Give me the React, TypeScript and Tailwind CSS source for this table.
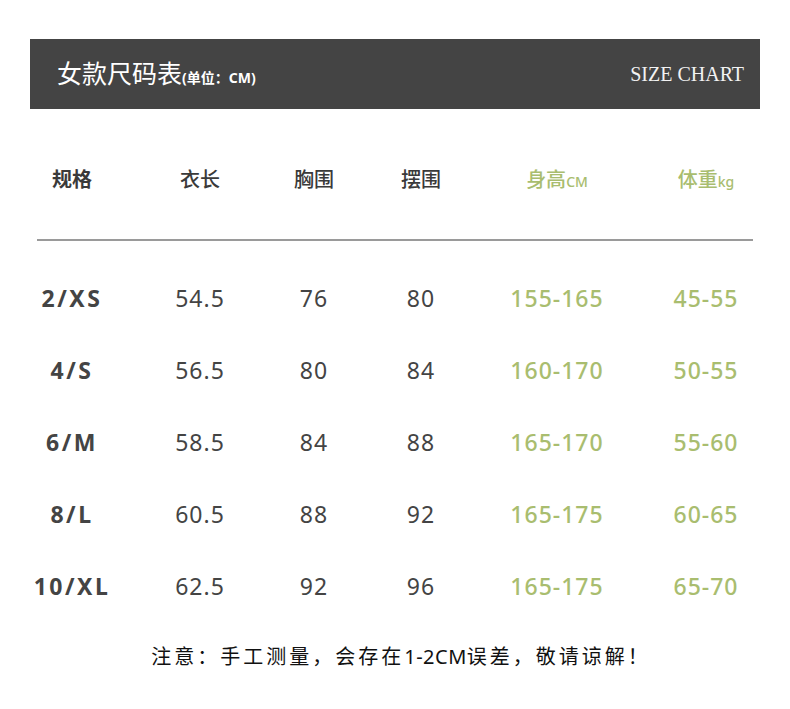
import React from "react";

const rows = [
  ["2/XS", "54.5", "76", "80", "155-165", "45-55"],
  ["4/S", "56.5", "80", "84", "160-170", "50-55"],
  ["6/M", "58.5", "84", "88", "165-170", "55-60"],
  ["8/L", "60.5", "88", "92", "165-175", "60-65"],
  ["10/XL", "62.5", "92", "96", "165-175", "65-70"],
];

const cols = "grid grid-cols-[104px_152px_76px_138px_134px_164px] ml-[20px]";
const cjk = { fontFamily: '"Noto Sans", "Noto Sans CJK SC", sans-serif' };

export default function App() {
  return (
    <div className="w-[790px] h-[709px] bg-white pt-[39px]" style={cjk}>
      <div className="mx-[30px] h-[70px] bg-[#444444] flex items-center justify-between pl-[27px] pr-[16px]">
        <div className="flex items-baseline text-white">
          <span className="text-[25px]">女款尺码表</span>
          <span className="text-[14px] font-bold">(单位：CM)</span>
        </div>
        <span className="text-[20px] text-[#f2f2f2]" style={{ fontFamily: '"Liberation Serif", serif' }}>
          SIZE CHART
        </span>
      </div>

      <div className={`${cols} h-[72px] mt-[35px] items-center text-center text-[20px] text-[#3a3a3a]`}>
        <span className="font-bold">规格</span>
        <span className="font-medium">衣长</span>
        <span className="font-medium">胸围</span>
        <span className="font-medium">摆围</span>
        <span className="font-medium text-[#a9bd6f]">
          身高<span className="text-[14px]">CM</span>
        </span>
        <span className="font-medium text-[#a9bd6f]">
          体重<span className="text-[14px]">kg</span>
        </span>
      </div>

      <div className="mt-[23px] ml-[37px] w-[716px] h-[2px] bg-[#9a9a9a]" />

      <div className="mt-[21px]">
        {rows.map((r) => (
          <div key={r[0]} className={`${cols} h-[72px] items-center text-center text-[23px] tracking-[1px] text-[#444444]`}>
            <span className="font-bold tracking-[2.5px]">{r[0]}</span>
            <span>{r[1]}</span>
            <span>{r[2]}</span>
            <span>{r[3]}</span>
            <span className="text-[#a9bd6f] font-medium">{r[4]}</span>
            <span className="text-[#a9bd6f] font-medium">{r[5]}</span>
          </div>
        ))}
      </div>

      <div className="mt-[20px] pl-[12px] text-center text-[20px] tracking-[3px] text-[#111111]">
        注意：手工测量，会存在<span className="tracking-[0.5px]">1-2CM</span>误差，敬请谅解！
      </div>
    </div>
  );
}
